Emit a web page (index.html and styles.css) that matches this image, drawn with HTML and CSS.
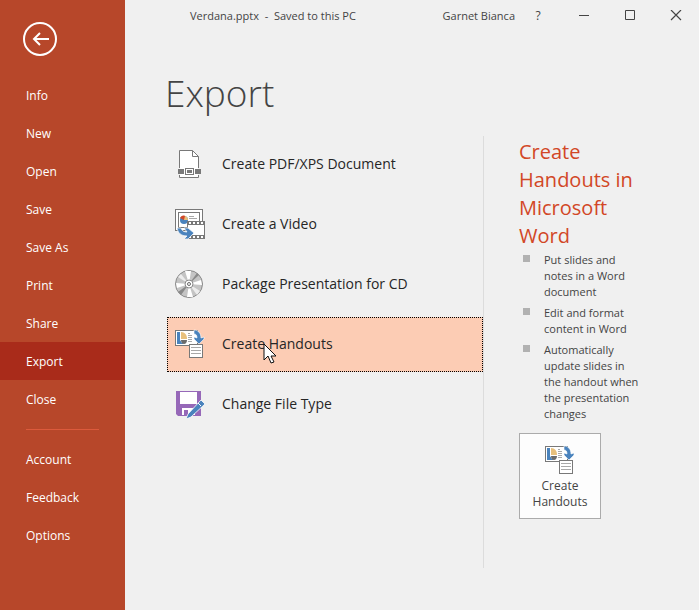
FILE: index.html
```html
<!DOCTYPE html>
<html lang="en">
<head>
    <meta charset="UTF-8">
    <meta name="viewport" content="width=device-width, initial-scale=1.0">
    <title>Verdana.pptx - Export</title>
    <link rel="stylesheet" href="styles.css">
</head>
<body>
    <!-- Shared by the list entry and the action button -->
    <svg class="symbols" aria-hidden="true">
        <symbol id="icon-handouts" viewBox="0 0 30 30">
            <rect x=".5" y="1.500" width="22" height="15" fill="#fff" stroke="#787878"/>
            <path d="M2 3h3v8l2 3h1v1H2z" fill="#4a83bd"/>
            <path d="M6 3c4 0 6 3 6 7H6z" fill="#e8c07c"/>
            <path d="M6 11h6c0 2-1 4-3 4s-3-2-3-4z" fill="#6b6b6b"/>
            <path d="M13 4.500h2M13 6.500h4M13 8.500h4M13 10.500h4M13 12.500h4" stroke="#a8a8a8"/>
            <rect x="14.500" y="15.500" width="13" height="13" fill="#fff" stroke="#787878"/>
            <path d="M16 18.500h10M16 21.500h10M16 24.500h10" stroke="#a8a8a8"/>
            <path d="M19 1c4 0 7 3 7 8l3-1v2l-5 5-5-5V8l3 1c0-3-1-4-3-4z" fill="#4a83bd" stroke="#fff" stroke-width=".6"/>
        </symbol>
    </svg>

    <aside class="sidebar">
        <button class="back" aria-label="Back">
            <svg width="34" height="34" viewBox="0 0 34 34" fill="none" stroke="#fff">
                <circle cx="17" cy="17" r="16" stroke-width="2"/>
                <path d="M26 17H11M17 11l-6 6 6 6" stroke-width="2"/>
            </svg>
        </button>
        <nav class="menu">
            <a href="#">Info</a>
            <a href="#">New</a>
            <a href="#">Open</a>
            <a href="#">Save</a>
            <a href="#">Save As</a>
            <a href="#">Print</a>
            <a href="#">Share</a>
            <a href="#" class="active">Export</a>
            <a href="#">Close</a>
            <hr>
            <a href="#">Account</a>
            <a href="#">Feedback</a>
            <a href="#">Options</a>
        </nav>
    </aside>

    <div class="page">
        <header class="titlebar">
            <span class="filename">Verdana.pptx&nbsp; -&nbsp; Saved to this PC</span>
            <span class="user">Garnet Bianca</span>
            <button class="help" aria-label="Help">?</button>
            <button class="window-btn" aria-label="Minimize">
                <svg width="12" height="12" viewBox="0 0 12 12" fill="none" stroke="#444"><path d="M1 5.500h10"/></svg>
            </button>
            <button class="window-btn" aria-label="Maximize">
                <svg width="12" height="12" viewBox="0 0 12 12" fill="none" stroke="#444"><path d="M1.500 .5h9v9h-9z"/></svg>
            </button>
            <button class="window-btn" aria-label="Close">
                <svg width="12" height="12" viewBox="0 0 12 12" fill="none" stroke="#444" stroke-width="1.200"><path d="M1 0l10 10M11 0L1 10"/></svg>
            </button>
        </header>

        <main>
            <h1>Export</h1>
            <div class="columns">
                <div class="options">
                    <button class="option">
                        <svg width="30" height="30" viewBox="0 0 30 30">
                            <path d="M4.500 1.500h13l6 6v21h-19z" fill="#fff" stroke="#787878"/>
                            <path d="M17.500 1.500v6h6" fill="none" stroke="#787878"/>
                            <path d="M2 19h25v7H2z" fill="#f0f0f0"/>
                            <path d="M5 18h18v9H5z" fill="#fff"/>
                            <path d="M3 20h6v5H3zM20 20h6v5h-6z" fill="#787878"/>
                            <rect x="10.500" y="19.500" width="8" height="6" fill="#fff" stroke="#787878"/>
                            <rect x="12" y="21" width="5" height="3" fill="#787878"/>
                        </svg>
                        <span>Create PDF/XPS Document</span>
                    </button>
                    <button class="option">
                        <svg width="30" height="30" viewBox="0 0 30 30">
                            <rect x=".5" y=".5" width="27" height="21" fill="#fff" stroke="#787878"/>
                            <rect x="3.500" y="3.500" width="21" height="15" fill="#fff" stroke="#787878"/>
                            <circle cx="9" cy="11" r="4" fill="#4a83bd"/>
                            <path d="M9 11V7a4 4 0 0 1 4 4z" fill="#e8c07c"/>
                            <path d="M9 11L5 9c1-2 3-3 5-2z" fill="#d24726"/>
                            <path d="M14 7.500h5M14 9.500h8" stroke="#a8a8a8"/>
                            <path d="M12 12h18v18H12z" fill="#787878"/>
                            <path d="M13 16h16v10H13z" fill="#fff"/>
                            <path d="M14 13h2v2h-2zM18 13h2v2h-2zM22 13h2v2h-2zM26 13h2v2h-2zM14 27h2v2h-2zM18 27h2v2h-2zM22 27h2v2h-2zM26 27h2v2h-2z" fill="#fff"/>
                            <path d="M2 19h4c1 3 3 4 6 4l-3-4h4l6 5-6 6H9l3-3C6 27 3 24 2 19z" fill="#4a83bd" stroke="#fff" stroke-width=".7"/>
                        </svg>
                        <span>Create a Video</span>
                    </button>
                    <button class="option">
                        <svg width="30" height="30" viewBox="0 0 30 30">
                            <circle cx="14" cy="15" r="13.500" fill="#c4c4c4" stroke="#8a8a8a"/>
                            <path d="M14 15L10 2h6zM14 15l12-4 1 5zM14 15l4 13h-6zM14 15L2 19l-1-5z" fill="#fff"/>
                            <path d="M14 15l8-11 2 2zM14 15L6 26l-3-3z" fill="#8a8a8a"/>
                            <path d="M14 15L3 8l3-3zM14 15l11 7-3 4z" fill="#ececec"/>
                            <circle cx="14" cy="15" r="4" fill="#fff" stroke="#8a8a8a"/>
                            <circle cx="14" cy="15" r="1.500" fill="#fff" stroke="#6b6b6b"/>
                        </svg>
                        <span>Package Presentation for CD</span>
                    </button>
                    <button class="option selected">
                        <svg width="30" height="30"><use href="#icon-handouts"/></svg>
                        <span>Create Handouts</span>
                        <svg class="cursor" width="14" height="21" viewBox="0 0 14 21">
                            <path d="M1 1v16l4-4 3 7 3-1-3-6h5z" fill="#fff" stroke="#111"/>
                        </svg>
                    </button>
                    <button class="option">
                        <svg width="30" height="30" viewBox="0 0 30 30">
                            <path d="M1 2h25v25H3l-2-2z" fill="#9668b8"/>
                            <path d="M5 3h17v12H5z" fill="#fff"/>
                            <path d="M7 19h13v7H7z" fill="#fff"/>
                            <path d="M9 21h4v5H9z" fill="#9668b8"/>
                            <path d="M26 11l4 4-14 13-5 2 2-5z" fill="#4a83bd" stroke="#fff" stroke-width=".8"/>
                            <path d="M23 14l3 3" stroke="#fff"/>
                        </svg>
                        <span>Change File Type</span>
                    </button>
                </div>

                <section class="details">
                    <h2>Create Handouts in Microsoft Word</h2>
                    <ul>
                        <li>Put slides and notes in a Word document</li>
                        <li>Edit and format content in Word</li>
                        <li>Automatically update slides in the handout when the presentation changes</li>
                    </ul>
                    <button class="action">
                        <svg width="30" height="30"><use href="#icon-handouts"/></svg>
                        <span>Create Handouts</span>
                    </button>
                </section>
            </div>
        </main>
    </div>
</body>
</html>
```
FILE: styles.css
```css
:root {
    --accent: #b7472a;
    --accent-dark: #a92b1a;
    --heading: #d24726;
    --bg: #f0f0f0;
    --text: #444;
}

* {
    margin: 0;
    padding: 0;
    box-sizing: border-box;
}

body {
    display: flex;
    min-height: 100vh;
    font-family: "Open Sans", "Noto Sans", sans-serif;
    font-size: 12px;
    line-height: 16px;
    color: var(--text);
    background: var(--bg);
}

button {
    border: none;
    background: none;
    font: inherit;
    color: inherit;
    cursor: pointer;
}

svg {
    display: block;
    flex: none;
}

.symbols {
    position: absolute;
    width: 0;
    height: 0;
}

.sidebar {
    flex: 0 0 125px;
    background: var(--accent);
}

.back {
    display: block;
    margin: 22px 0 20px 23px;
}

.menu a {
    display: block;
    padding: 2px 26px 0;
    line-height: 36px;
    color: #fff;
    text-decoration: none;
}

.menu .active {
    background: var(--accent-dark);
}

.menu hr {
    margin: 11px 26px 10px;
    border: none;
    border-top: 1px solid #dc5a3c;
}

.page {
    flex: 1;
    min-width: 0;
}

.titlebar {
    display: flex;
    align-items: center;
    height: 31px;
    font-size: 11px;
}

.filename {
    flex: 1;
    padding-left: 65px;
}

.help {
    width: 46px;
    font-size: 12px;
}

.window-btn {
    display: flex;
    align-items: center;
    justify-content: center;
    width: 46px;
    height: 31px;
}

main {
    padding: 34px 57px 42px 42px;
}

h1 {
    margin-left: -2px;
    font-size: 37px;
    font-weight: 300;
    line-height: 56px;
}

.columns {
    display: flex;
    margin-top: 15px;
}

.options {
    display: flex;
    flex: 1;
    flex-direction: column;
    gap: 5px;
    min-height: 432px;
    padding-top: 1px;
    border-right: 1px solid #dcdcdc;
}

.option {
    position: relative;
    display: flex;
    align-items: center;
    gap: 17px;
    height: 55px;
    padding: 0 7px 2px;
    border: 1px solid transparent;
    font-size: 14px;
    line-height: 20px;
    color: #262626;
}

.option.selected {
    border: 1px dotted #000;
    background: #fcccb4;
}

.cursor {
    position: absolute;
    top: 25px;
    left: 95px;
}

.details {
    width: 158px;
    padding-left: 35px;
    font-size: 11px;
}

h2 {
    margin-top: 2px;
    font-size: 20px;
    font-weight: 400;
    line-height: 28px;
    color: var(--heading);
}

ul {
    display: flex;
    flex-direction: column;
    gap: 5px;
    margin-top: 2px;
    list-style: none;
}

li {
    display: flex;
    padding-left: 4px;
}

li::before {
    content: "";
    flex: none;
    width: 7px;
    height: 7px;
    margin: 3px 14px 0 0;
    background: #b1b1b1;
}

.action {
    display: flex;
    flex-direction: column;
    align-items: center;
    width: 82px;
    height: 86px;
    margin-top: 11px;
    padding: 11px 8px;
    gap: 3px;
    border: 1px solid #ababab;
    background: #fdfdfd;
    font-size: 12px;
}
```
